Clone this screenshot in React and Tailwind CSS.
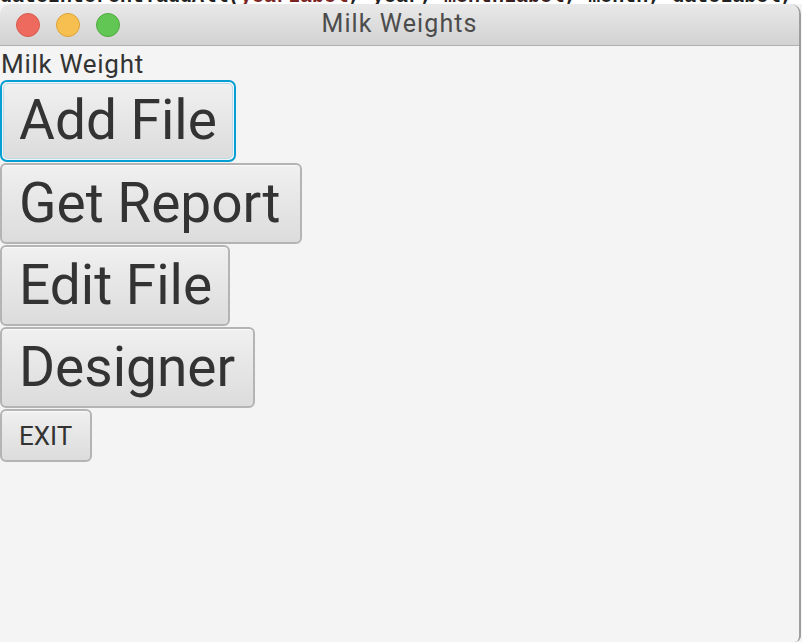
import React from "react";

const btnBase =
  "flex items-center rounded-[6px] border-2 border-[#b4b4b4] bg-gradient-to-b from-[#f0f0f0] to-[#dcdcdc] text-[#333333] shadow-[inset_0_1px_0_#fbfbfb] leading-none";

export default function App() {
  return (
    <div
      className="w-[802px] h-[642px] bg-[#f4f4f4] flex flex-col overflow-hidden"
      style={{ fontFamily: "Roboto, 'Liberation Sans', sans-serif" }}
    >
      {/* desktop strip behind window */}
      <div className="h-[4px] bg-white overflow-hidden shrink-0">
        <div
          className="mt-[-13px] whitespace-pre text-[20px] leading-[20px] text-[#222] font-bold"
          style={{ fontFamily: "'Liberation Mono', monospace" }}
        >
          dateInterent.addAll(<span className="text-[#7a2424]">yearLabel</span>, year, <span className="text-[#3a2020]">monthLabel</span>, month, dateLabel,
        </div>
      </div>
      {/* window */}
      <div className="flex-1 flex flex-col w-[801px] border-r-2 border-[#9e9e9e] rounded-t-[10px] rounded-b-[6px] overflow-hidden bg-[#f4f4f4]">
        {/* title bar */}
        <div className="h-[42px] shrink-0 flex items-center relative bg-gradient-to-b from-[#e9e9e9] to-[#d2d2d2] border-b border-[#b1b1b1]">
          <div className="flex items-center gap-[16px] pl-[16px]">
            <span className="w-[24px] h-[24px] rounded-full bg-[#ee6a5e] border border-[#d85a4d]" />
            <span className="w-[24px] h-[24px] rounded-full bg-[#f6bf4f] border border-[#dca237]" />
            <span className="w-[24px] h-[24px] rounded-full bg-[#62c655] border border-[#4fa93d]" />
          </div>
          <div className="absolute inset-0 flex items-center justify-center text-[25px] tracking-[1.1px] text-[#4c4c4c] pb-[1px]">
            Milk Weights
          </div>
        </div>
        {/* content */}
        <div className="flex flex-col items-start">
          <div className="h-[34px] pl-[1px] text-[26px] tracking-[0.7px] leading-[34px] text-[#333333] pt-[1px]">
            Milk Weight
          </div>
          <div className="flex flex-col gap-[1px]">
            <button className="flex items-center w-[236px] h-[82px] rounded-[7px] border-2 border-[#039ed3] p-[1px] bg-[#f4f4f4]">
              <span className="flex-1 h-full flex items-center pl-[15px] rounded-[5px] bg-gradient-to-b from-[#f0f0f0] to-[#dcdcdc] text-[#333333] text-[55px] leading-none border border-[#b9dbe9] pb-[1px]">
                Add File
              </span>
            </button>
            <button className={btnBase + " w-[302px] h-[81px] pl-[17px] text-[55px]"}>
              Get Report
            </button>
            <button className={btnBase + " w-[230px] h-[81px] pl-[17px] text-[55px]"}>
              Edit File
            </button>
            <button className={btnBase + " w-[255px] h-[81px] pl-[17px] text-[55px]"}>
              Designer
            </button>
            <button className={btnBase + " w-[92px] h-[53px] pl-[17px] text-[26px]"}>
              EXIT
            </button>
          </div>
        </div>
      </div>
    </div>
  );
}
